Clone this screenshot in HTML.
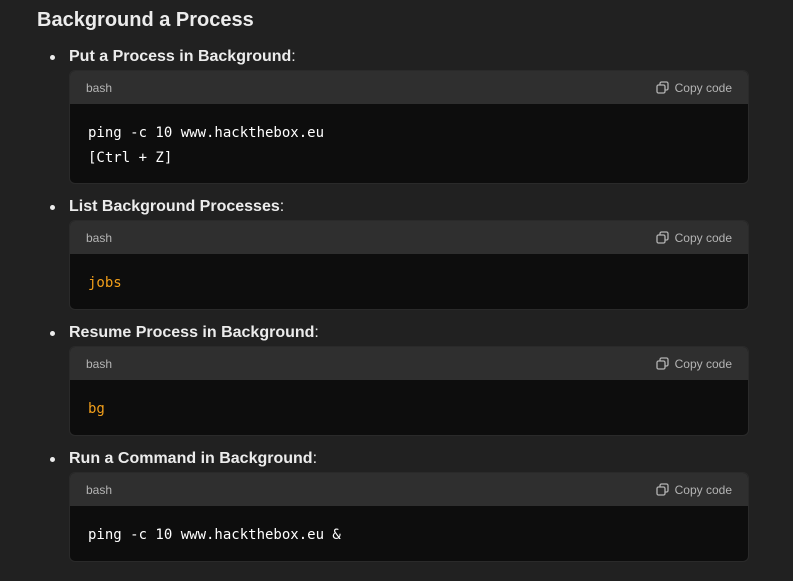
<!DOCTYPE html>
<html><head><style>
body{margin:0;width:793px;height:581px;background:#212121;font-family:"Liberation Sans",sans-serif;color:#ececec;position:relative;overflow:hidden}
h2{position:absolute;left:37px;top:7px;margin:0;font-size:20px;font-weight:bold;line-height:26px}
.li{position:absolute;left:69px;font-size:16px;font-weight:bold;line-height:20px}
.li:before{content:"";position:absolute;left:-19px;top:8px;width:5px;height:5px;border-radius:50%;background:#ececec}
.li span{font-weight:normal}
.cb{position:absolute;left:69px;width:680px;border-radius:6px;overflow:hidden;background:#0d0d0d;border:1px solid #2a2a2a;box-sizing:border-box}
.hd{height:33px;background:#2f2f2f;position:relative;font-size:12px;color:#b4b4b4}
.hd .l{position:absolute;left:16px;top:10px}
.hd .r{position:absolute;right:16px;top:10px}
.hd svg{position:absolute;left:-19px;top:0}
.code{padding:17px 18px;font-family:"DejaVu Sans Mono","Liberation Mono",monospace;font-size:14px;line-height:25px;color:#fff;white-space:pre}
.o{color:#f29f1a}
</style></head><body>
<h2>Background a Process</h2>
<div class="li" style="top:47px">Put a Process in Background<span>:</span></div>
<div class="cb" style="top:70px;height:114px"><div class="hd"><span class="l">bash</span><span class="r"><svg width="14" height="14" viewBox="0 0 14 14" fill="none" stroke="#b4b4b4" stroke-width="1.3"><rect x="1" y="4" width="8" height="8" rx="1.5"/><path d="M4 4V2.5A1.5 1.5 0 0 1 5.5 1h5A1.5 1.5 0 0 1 12 2.5v5A1.5 1.5 0 0 1 10.5 9H9"/></svg>Copy code</span></div><div class="code">ping -c 10 www.hackthebox.eu
[Ctrl + Z]</div></div>
<div class="li" style="top:197px">List Background Processes<span>:</span></div>
<div class="cb" style="top:220px;height:90px"><div class="hd"><span class="l">bash</span><span class="r"><svg width="14" height="14" viewBox="0 0 14 14" fill="none" stroke="#b4b4b4" stroke-width="1.3"><rect x="1" y="4" width="8" height="8" rx="1.5"/><path d="M4 4V2.5A1.5 1.5 0 0 1 5.5 1h5A1.5 1.5 0 0 1 12 2.5v5A1.5 1.5 0 0 1 10.5 9H9"/></svg>Copy code</span></div><div class="code o">jobs</div></div>
<div class="li" style="top:323px">Resume Process in Background<span>:</span></div>
<div class="cb" style="top:346px;height:90px"><div class="hd"><span class="l">bash</span><span class="r"><svg width="14" height="14" viewBox="0 0 14 14" fill="none" stroke="#b4b4b4" stroke-width="1.3"><rect x="1" y="4" width="8" height="8" rx="1.5"/><path d="M4 4V2.5A1.5 1.5 0 0 1 5.5 1h5A1.5 1.5 0 0 1 12 2.5v5A1.5 1.5 0 0 1 10.5 9H9"/></svg>Copy code</span></div><div class="code o">bg</div></div>
<div class="li" style="top:449px">Run a Command in Background<span>:</span></div>
<div class="cb" style="top:472px;height:90px"><div class="hd"><span class="l">bash</span><span class="r"><svg width="14" height="14" viewBox="0 0 14 14" fill="none" stroke="#b4b4b4" stroke-width="1.3"><rect x="1" y="4" width="8" height="8" rx="1.5"/><path d="M4 4V2.5A1.5 1.5 0 0 1 5.5 1h5A1.5 1.5 0 0 1 12 2.5v5A1.5 1.5 0 0 1 10.5 9H9"/></svg>Copy code</span></div><div class="code">ping -c 10 www.hackthebox.eu &amp;</div></div>
</body></html>
